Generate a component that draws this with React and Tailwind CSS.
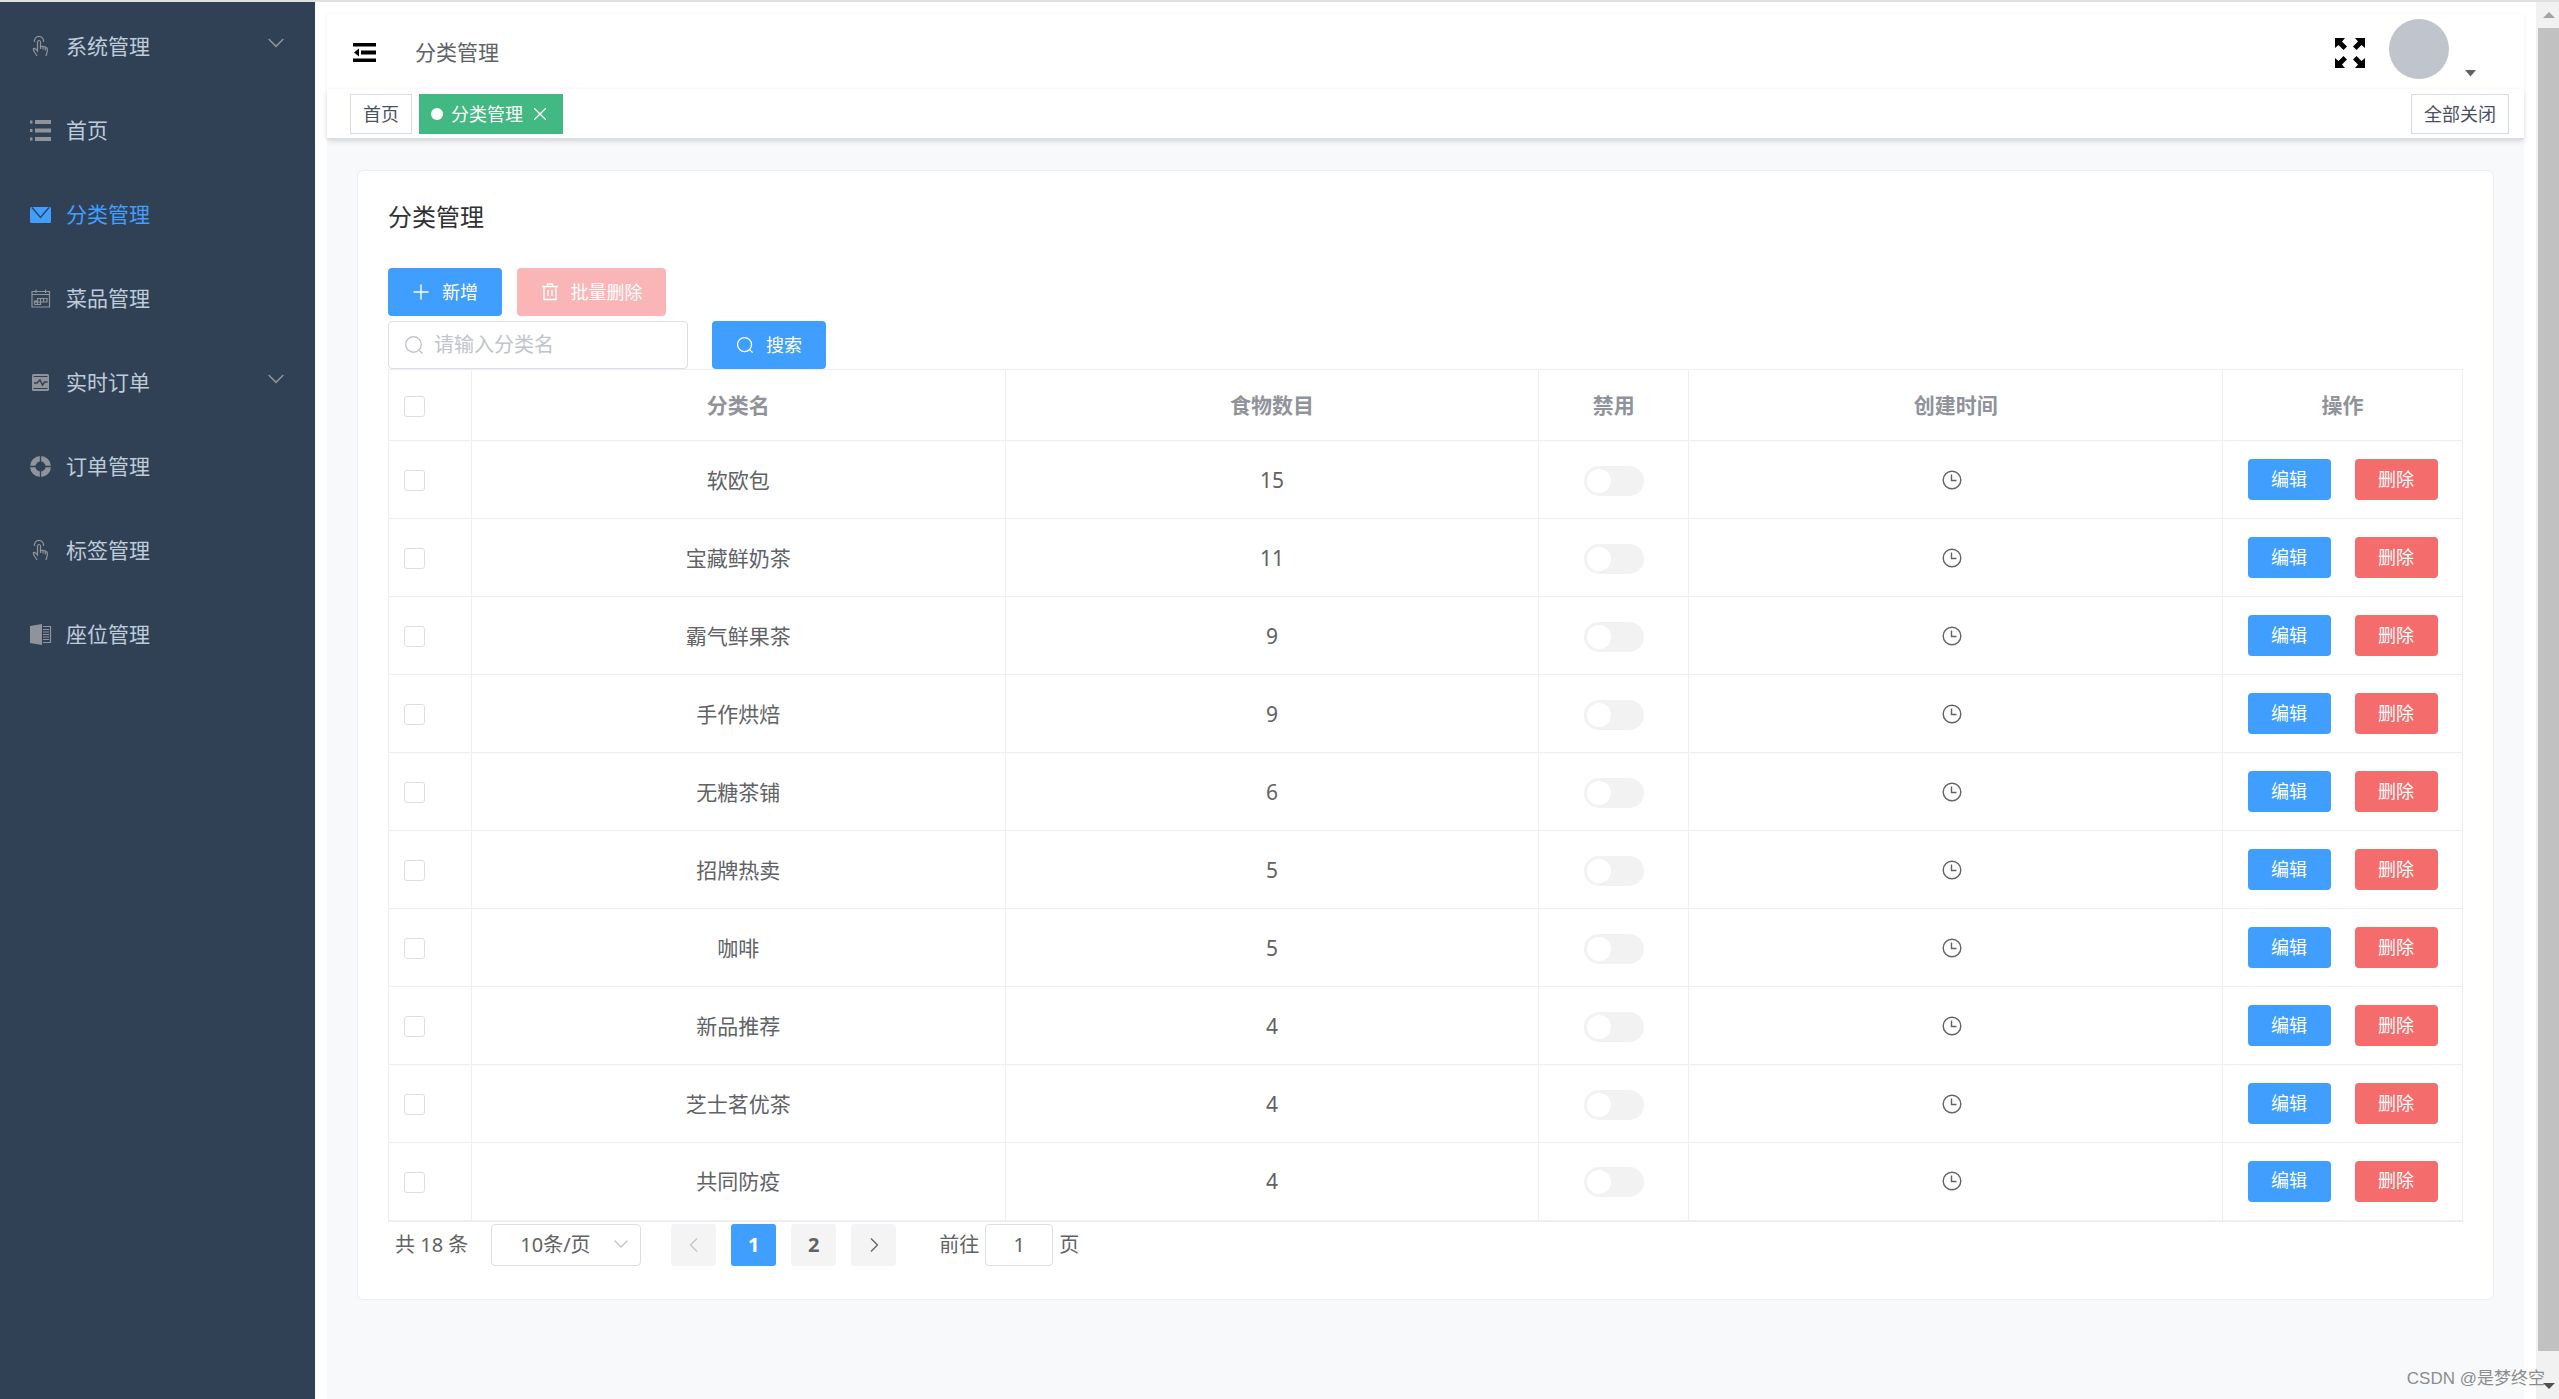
import { useState } from "react";

const menus = [
  { icon: "finger", label: "系统管理", sub: true },
  { icon: "list", label: "首页" },
  { icon: "message", label: "分类管理", active: true },
  { icon: "date", label: "菜品管理" },
  { icon: "marketing", label: "实时订单", sub: true },
  { icon: "help", label: "订单管理" },
  { icon: "finger", label: "标签管理" },
  { icon: "notebook", label: "座位管理" },
];

const categories = [
  { id: 1, name: "软欧包", count: 15 },
  { id: 2, name: "宝藏鲜奶茶", count: 11 },
  { id: 3, name: "霸气鲜果茶", count: 9 },
  { id: 4, name: "手作烘焙", count: 9 },
  { id: 5, name: "无糖茶铺", count: 6 },
  { id: 6, name: "招牌热卖", count: 5 },
  { id: 7, name: "咖啡", count: 5 },
  { id: 8, name: "新品推荐", count: 4 },
  { id: 9, name: "芝士茗优茶", count: 4 },
  { id: 10, name: "共同防疫", count: 4 },
];

const MenuIcon = ({ name }) => {
  const line = { fill: "none", stroke: "currentColor", strokeWidth: 1.2 };
  return (
    <svg viewBox="0 -1 24 24" className="size-6 shrink-0" aria-hidden="true">
      {name === "finger" && (
        <g {...line}>
          <path d="M5.500 7A4.600 4.600 0 1 1 14.500 7" />
          <path d="M8 21C7 18.500 4 16 4.300 14C4.800 12.800 6.500 13.500 8.500 16V7C8.500 5 11.500 5 11.500 7V11.500C14 11 18.500 12 18.500 14.500C18.500 17 17.500 18.500 17 21" />
          <path d="M11.500 11V14M14 12V14.500M16.300 13V15.500" />
        </g>
      )}
      {name === "list" && (
        <g fill="currentColor">
          <path d="M6 1H22V5H6zM6 9.500H22V13.500H6zM6 18H22V22H6z" />
          <path d="M1 1.500H3.500V4.500H1zM1 10H3.500V13H1zM1 18.500H3.500V21.500H1z" />
        </g>
      )}
      {name === "message" && (
        <g>
          <rect x="1" y="4" width="21" height="16" rx="1.500" fill="currentColor" />
          <path d="M3 4.500L11.500 14.500L20 4.500" fill="none" stroke="#304156" strokeWidth="1.300" />
        </g>
      )}
      {name === "date" && (
        <g {...line}>
          <path d="M3 4.500H20.500V20H3zM3 7.500H20.500M7 2.500V6M16.500 2.500V6" />
          <path d="M5.500 17.500V14H8.500V11.500H18V15H5.500M5.500 17.500H11.500V11.500M8.500 17.500V14M14.500 11.500V15" />
        </g>
      )}
      {name === "marketing" && (
        <g>
          <rect x="3" y="3" width="17" height="17" rx="1.500" fill="currentColor" />
          <path d="M4.500 5.500H18.500M4.500 17.500H18.500" stroke="#304156" strokeWidth="1.200" />
          <path d="M5 12H8L11 9L13.500 14L15.500 11H18.500" fill="none" stroke="#304156" strokeWidth="1.400" />
        </g>
      )}
      {name === "help" && (
        <g>
          <circle cx="11.500" cy="11.500" r="7.800" fill="none" stroke="currentColor" strokeWidth="5.400" />
          <path d="M11.500 0V7M11.500 16V23M0 11.500H7M16 11.500H23" stroke="#304156" strokeWidth="1.300" />
        </g>
      )}
      {name === "notebook" && (
        <g>
          <path d="M1 3L13 1V22L1 20z" fill="currentColor" />
          <path d="M14 3.500H21.500V19.500H14" {...line} />
          <path d="M14 6.500H20M14 9H20M14 11.500H20M14 14H20M14 16.500H20" {...line} />
        </g>
      )}
    </svg>
  );
};

const Chevron = ({ className, d }) => (
  <svg viewBox="0 0 16 16" className={className} fill="none" stroke="currentColor" strokeWidth="1.300" aria-hidden="true">
    <path d={d} />
  </svg>
);

const SearchIcon = ({ className }) => (
  <svg viewBox="0 0 20 20" className={className} fill="none" stroke="currentColor" strokeWidth="1.400" aria-hidden="true">
    <circle cx="9.500" cy="9.500" r="7.800" />
    <path d="M15 15L18.500 18.500" />
  </svg>
);

const Sidebar = () => (
  <nav className="w-[315px] shrink-0 bg-[#304156] pt-0.5">
    {menus.map((m, i) => (
      <a
        key={i}
        href="#"
        className={`flex h-21 items-center pl-[29px] pr-[30px] ${m.active ? "text-[#409eff]" : "text-[#bfcbd9]"}`}
      >
        <span className={m.active ? "text-[#409eff]" : "text-[#909399]"}>
          <MenuIcon name={m.icon} />
        </span>
        <span className="ml-[13px]">{m.label}</span>
        {m.sub && <Chevron className="mb-1.5 ml-auto size-[18px] text-[#909399]" d="M1.500 4.500L8 11L14.500 4.500" />}
      </a>
    ))}
  </nav>
);

const Navbar = () => (
  <header className="flex h-[75px] items-center pl-[26px] pr-[47px] pt-0.5 shadow-[0_1px_4px_rgba(0,21,41,0.08)]">
    <button type="button" aria-label="折叠菜单">
      <svg viewBox="0 0 24 20" className="h-5 w-6" aria-hidden="true">
        <path d="M0 0H23V3.500H0zM8 7.500H23V11.500H8zM0 15.500H23V19H0zM6 5.500V13.500L1 9.500z" />
      </svg>
    </button>
    <span className="ml-[38px] pb-0.5 text-[#606266]">分类管理</span>
    <button type="button" aria-label="全屏" className="ml-auto">
      <svg viewBox="0 0 30 30" className="size-[30px]" aria-hidden="true">
        <path d="M0 0H10L7 3.500L12 8.500L8.500 12L3.500 7L0 10zM30 0H20L23 3.500L18 8.500L21.500 12L26.500 7L30 10zM0 30H10L7 26.500L12 21.500L8.500 18L3.500 23L0 20zM30 30H20L23 26.500L18 21.500L21.500 18L26.500 23L30 20z" />
      </svg>
    </button>
    <button type="button" aria-label="用户菜单" className="ml-6 flex items-end pb-2">
      <span className="size-[60px] rounded-full bg-[#c0c4cc]" />
      <svg viewBox="0 0 12 7" className="mb-0.5 ml-4 h-[7px] w-3 text-[#606266]" aria-hidden="true">
        <path d="M0 0H11L5.500 6.500z" fill="currentColor" />
      </svg>
    </button>
  </header>
);

const TagsView = () => (
  <div className="flex h-[50px] items-center border-b border-[#d8dce5] bg-white pl-[23px] pr-[15px] text-lg shadow-[0_2px_5px_rgba(0,0,0,0.15)]">
    <a href="#" className="flex h-10 items-center border border-[#d8dce5] px-3 text-[#495060]">首页</a>
    <a href="#" className="ml-[7px] flex h-10 items-center border border-[#42b983] bg-[#42b983] px-[11px] text-white">
      <span className="mr-2 size-3 rounded-full bg-white" />
      分类管理
      <svg viewBox="0 0 12 12" className="ml-[11px] mr-[5px] size-3" stroke="currentColor" strokeWidth="1.300" aria-hidden="true">
        <path d="M0 0L12 12M12 0L0 12" />
      </svg>
    </a>
    <button type="button" className="ml-auto h-10 border border-[#d8dce5] px-3 text-[#495060]">全部关闭</button>
  </div>
);

const Checkbox = ({ label, checked, onChange }) => (
  <input
    type="checkbox"
    aria-label={label}
    checked={checked}
    onChange={onChange}
    className="mt-0.5 block size-[21px] appearance-none rounded-[3px] border border-[#dcdfe6] bg-white checked:border-[#409eff] checked:bg-[#409eff]"
  />
);

const CategoryTable = ({ selected, setSelected }) => {
  const allChecked = selected.length === categories.length;

  const toggle = (id) => {
    setSelected((prev) => (prev.includes(id) ? prev.filter((x) => x !== id) : [...prev, id]));
  };

  return (
    <table className="w-full table-fixed border-collapse border border-b-2 border-[#ebeef5] text-center text-[#606266]">
      <colgroup>
        <col className="w-[83px]" />
        <col />
        <col />
        <col className="w-[150px]" />
        <col />
        <col className="w-[240px]" />
      </colgroup>
      <thead>
        <tr className="h-[71px] text-[#909399] [&>th]:border [&>th]:border-[#ebeef5]">
          <th className="pl-[15px]">
            <Checkbox
              label="全选"
              checked={allChecked}
              onChange={() => setSelected(allChecked ? [] : categories.map((c) => c.id))}
            />
          </th>
          <th>分类名</th>
          <th>食物数目</th>
          <th>禁用</th>
          <th>创建时间</th>
          <th>操作</th>
        </tr>
      </thead>
      <tbody>
        {categories.map((c) => (
          <tr key={c.id} className="h-[78px] [&>td]:border [&>td]:border-[#ebeef5]">
            <td className="pl-[15px]">
              <Checkbox label={c.name} checked={selected.includes(c.id)} onChange={() => toggle(c.id)} />
            </td>
            <td>{c.name}</td>
            <td>{c.count}</td>
            <td>
              <input
                type="checkbox"
                role="switch"
                aria-label={`禁用${c.name}`}
                className="mx-auto mt-0.5 block h-[30px] w-[60px] appearance-none rounded-full bg-[#f2f2f2] p-[3px] before:block before:size-6 before:rounded-full before:bg-white checked:bg-[#409eff] checked:before:ml-auto"
              />
            </td>
            <td className="pr-2">
              <svg viewBox="0 0 20 20" className="mx-auto size-5" fill="none" stroke="currentColor" strokeWidth="1.400" aria-hidden="true">
                <circle cx="10" cy="10" r="8.800" />
                <path d="M9.500 4.500V10.500H14.500" />
              </svg>
            </td>
            <td>
              <div className="flex justify-center gap-6 text-lg text-white">
                <button type="button" className="h-[41px] w-[83px] rounded bg-[#409eff] pb-0.5">编辑</button>
                <button type="button" className="h-[41px] w-[83px] rounded bg-[#f56c6c] pb-0.5">删除</button>
              </div>
            </td>
          </tr>
        ))}
      </tbody>
    </table>
  );
};

const Pagination = () => {
  const [page, setPage] = useState(1);

  return (
    <div className="mt-0.5 flex h-[42px] items-center pl-[7px] text-[20px] text-[#606266]">
      <span>共 18 条</span>
      <div className="relative ml-[23px]">
        <select aria-label="每页条数" className="h-[42px] w-[150px] appearance-none rounded border border-[#dcdfe6] bg-white pl-7 text-[20px]">
          <option>10条/页</option>
          <option>20条/页</option>
        </select>
        <Chevron className="pointer-events-none absolute right-3 top-3 size-4 text-[#c0c4cc]" d="M1.500 4.500L8 11L14.500 4.500" />
      </div>
      <div className="ml-[30px] flex gap-[15px] font-bold">
        <button type="button" aria-label="上一页" disabled={page === 1} onClick={() => setPage(1)} className="flex h-[42px] w-[45px] items-center justify-center rounded-[3px] bg-[#f4f4f5] disabled:text-[#c0c4cc]">
          <Chevron className="size-4" d="M11 1.500L4.500 8L11 14.500" />
        </button>
        {[1, 2].map((p) => (
          <button
            key={p}
            type="button"
            onClick={() => setPage(p)}
            className={`h-[42px] w-[45px] rounded-[3px] ${p === page ? "bg-[#409eff] text-white" : "bg-[#f4f4f5]"}`}
          >
            {p}
          </button>
        ))}
        <button type="button" aria-label="下一页" disabled={page === 2} onClick={() => setPage(2)} className="flex h-[42px] w-[45px] items-center justify-center rounded-[3px] bg-[#f4f4f5] disabled:text-[#c0c4cc]">
          <Chevron className="size-4" d="M5 1.500L11.500 8L5 14.500" />
        </button>
      </div>
      <label className="ml-[43px] flex items-center gap-1.5">
        前往
        <input
          value={page}
          onChange={(e) => setPage(Number(e.target.value) || 1)}
          className="h-[42px] w-[68px] rounded border border-[#dcdfe6] text-center"
        />
        页
      </label>
    </div>
  );
};

const Scrollbar = () => (
  <div className="flex w-[23px] shrink-0 flex-col items-center bg-[#f1f1f1] pl-0.5" aria-hidden="true">
    <svg viewBox="0 0 12 6" className="my-2.5 h-1.5 w-3 shrink-0 fill-[#a3a3a3]">
      <path d="M0 6L6 0L12 6z" />
    </svg>
    <div className="w-full flex-1 bg-[#c1c1c1]" />
    <svg viewBox="0 0 12 6" className="mb-2.5 mt-8 h-1.5 w-3 shrink-0 fill-[#505050]">
      <path d="M0 0L6 6L12 0z" />
    </svg>
  </div>
);

const App = () => {
  const [selected, setSelected] = useState([]);
  const [keyword, setKeyword] = useState("");

  return (
    <div className="relative flex min-h-screen border-t-2 border-[#e0e0e0] bg-white font-['Noto_Sans','Noto_Sans_CJK_SC',sans-serif] text-[21px] leading-8">
      <Sidebar />
      <main className="mx-3 flex min-w-0 flex-1 flex-col bg-[#f8f9fb]">
        <div className="bg-white pt-3">
          <Navbar />
        </div>
        <TagsView />
        <section className="mx-[30px] mt-[31px] rounded-md border border-[#ebeef5] bg-white px-[30px] pb-[33px] pt-[30px]">
          <h1 className="text-2xl text-[#303133]">分类管理</h1>
          <div className="mt-[35px] flex gap-[15px] text-lg text-white">
            <button type="button" className="flex h-12 w-[114px] items-center justify-center gap-3 rounded bg-[#409eff]">
              <svg viewBox="0 0 18 18" className="size-[18px]" stroke="currentColor" strokeWidth="1.400" aria-hidden="true">
                <path d="M9 1.500V16.500M1.500 9H16.500" />
              </svg>
              新增
            </button>
            <button type="button" disabled={!selected.length} className="flex h-12 w-[149px] items-center justify-center gap-3 rounded bg-[#f56c6c] disabled:bg-[#fab6b6]">
              <svg viewBox="0 0 18 18" className="size-[18px]" fill="none" stroke="currentColor" strokeWidth="1.400" aria-hidden="true">
                <path d="M1 3.500H17M3 3.500V16.500H15V3.500M6.500 3V1H11.500V3M7 7V13M11 7V13" />
              </svg>
              批量删除
            </button>
          </div>
          <div className="mt-[5px] flex">
            <label className="flex h-12 w-[300px] items-center gap-2.5 rounded border border-[#dcdfe6] pl-[15px] text-[#c0c4cc]">
              <SearchIcon className="size-5 shrink-0" />
              <input
                value={keyword}
                onChange={(e) => setKeyword(e.target.value)}
                placeholder="请输入分类名"
                className="w-full min-w-0 text-[20px] text-[#606266] outline-none placeholder:text-[#c0c4cc]"
              />
            </label>
            <button type="button" className="ml-6 flex h-12 w-[114px] items-center justify-center gap-3 rounded bg-[#409eff] text-lg text-white">
              <SearchIcon className="size-[18px]" />
              搜索
            </button>
          </div>
          <CategoryTable selected={selected} setSelected={setSelected} />
          <Pagination />
        </section>
      </main>
      <Scrollbar />
      <span className="absolute bottom-1 right-3.5 font-['Liberation_Sans','Noto_Sans_CJK_SC',sans-serif] text-[17px] text-[#8c8c8c]">CSDN @是梦终空</span>
    </div>
  );
};

export default App;
